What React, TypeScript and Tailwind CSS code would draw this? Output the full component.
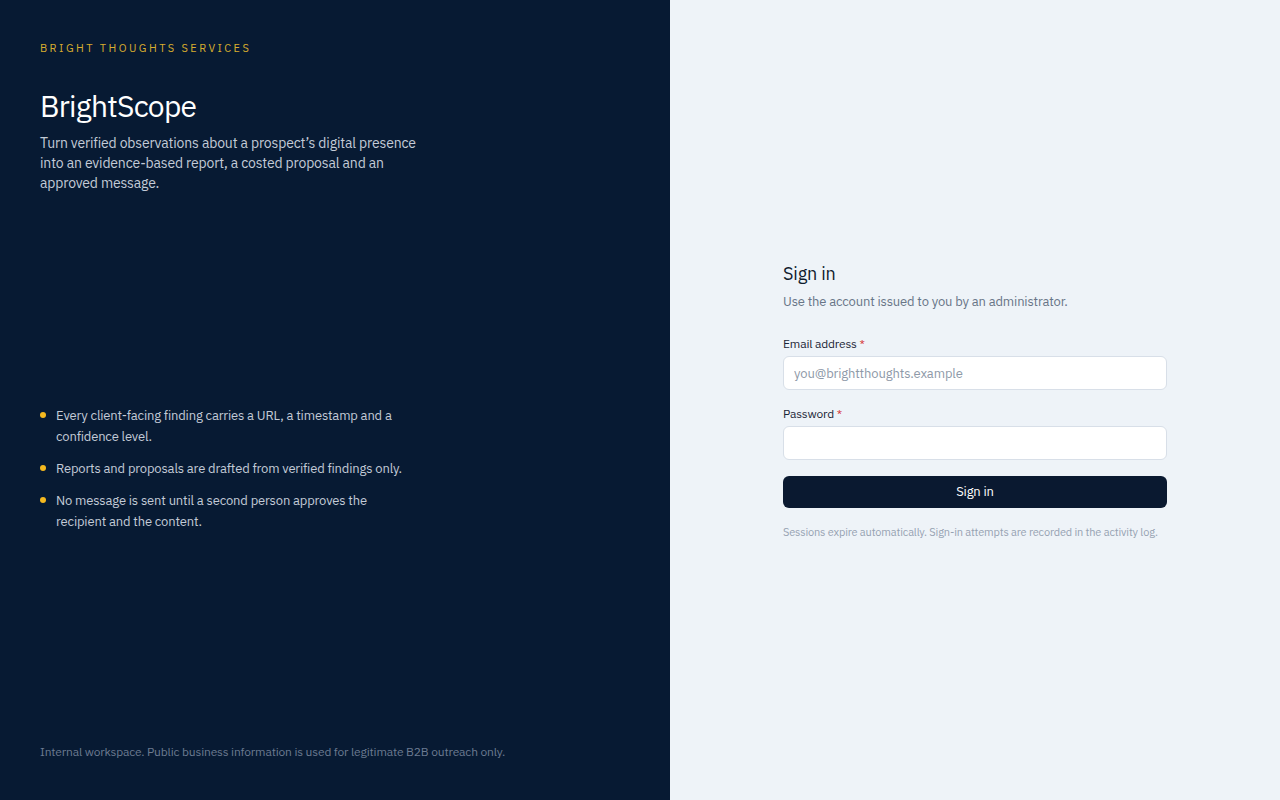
const points = [
  "Every client-facing finding carries a URL, a timestamp and a confidence level.",
  "Reports and proposals are drafted from verified findings only.",
  "No message is sent until a second person approves the recipient and the content.",
];

function Field({ label, type, placeholder }: { label: string; type: string; placeholder?: string }) {
  return (
    <label className="block">
      <span className="block text-xs leading-4 text-[#1b2536]">
        {label} <span className="text-[#d63a3a]">*</span>
      </span>
      <input
        type={type}
        placeholder={placeholder}
        className="mt-1 h-[34px] w-full rounded-md border border-[#d8dfe8] bg-white px-2.5 text-[13px] tracking-[-0.01em] text-[#0f1b2d] outline-none placeholder:text-[#8e99a8]"
      />
    </label>
  );
}

export default function App() {
  return (
    <div
      className="flex h-screen w-full tracking-[-0.01em]"
      style={{ fontFamily: '"IBM Plex Sans", "Liberation Sans", sans-serif' }}
    >
      <aside className="flex w-[670px] shrink-0 flex-col justify-between bg-[#071a33] px-10 pb-10 pt-10">
        <div>
          <p className="text-[11px] leading-4 tracking-[0.22em] text-[#d8ad2e]">BRIGHT THOUGHTS SERVICES</p>
          <h1 className="mt-8 text-[30px] leading-9 tracking-tight text-white">BrightScope</h1>
          <p className="mt-[9px] max-w-[390px] text-sm leading-5 text-[#c3cbd7]">
            Turn verified observations about a prospect’s digital presence into an evidence-based report, a
            costed proposal and an approved message.
          </p>
        </div>

        <ul className="max-w-[372px] space-y-[11px]">
          {points.map((p) => (
            <li key={p} className="flex gap-2.5 text-[13px] leading-[21px] text-[#c3cbd7]">
              <span className="mt-[7px] h-1.5 w-1.5 shrink-0 rounded-full bg-[#f5b91f]" />
              <span>{p}</span>
            </li>
          ))}
        </ul>

        <p className="text-xs leading-4 text-[#6c7b91]">
          Internal workspace. Public business information is used for legitimate B2B outreach only.
        </p>
      </aside>

      <main className="flex flex-1 items-center justify-center bg-[#eef3f8]">
        <div className="w-full max-w-sm">
          <h2 className="text-lg leading-7 text-[#0f1b2d]">Sign in</h2>
          <p className="mt-1 text-[13px] leading-5 text-[#687587]">Use the account issued to you by an administrator.</p>

          <form className="mt-6 space-y-4" onSubmit={(e) => e.preventDefault()}>
            <Field label="Email address" type="email" placeholder="you@brightthoughts.example" />
            <Field label="Password" type="password" />
            <button
              type="submit"
              className="h-8 w-full rounded-md bg-[#0a1930] text-[13px] text-white"
            >
              Sign in
            </button>
          </form>

          <p className="mt-4 text-[11px] leading-4 text-[#96a2b2]">
            Sessions expire automatically. Sign-in attempts are recorded in the activity log.
          </p>
        </div>
      </main>
    </div>
  );
}
